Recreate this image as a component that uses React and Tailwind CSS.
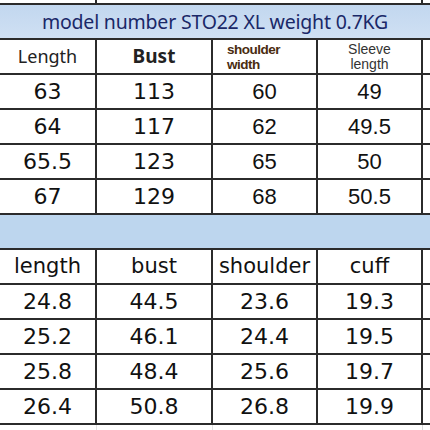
const comic = { fontFamily: '"DejaVu Sans", sans-serif' };

const cols = "grid grid-cols-[97px_116px_105px_105px_1fr]";
const cell = "flex items-center justify-center border-r-2 border-[#2b2b2b] leading-none text-[#111]";

const upper = [
  ["63", "113", "60", "49"],
  ["64", "117", "62", "49.5"],
  ["65.5", "123", "65", "50"],
  ["67", "129", "68", "50.5"],
];

const lower = [
  ["24.8", "44.5", "23.6", "19.3"],
  ["25.2", "46.1", "24.4", "19.5"],
  ["25.8", "48.4", "25.6", "19.7"],
  ["26.4", "50.8", "26.8", "19.9"],
];

function DataRow({ values, mixed, size = "text-[22px]" }) {
  return (
    <div className={`${cols} h-[35px] border-t-2 border-[#2b2b2b]`}>
      {values.map((v, i) => (
        <div
          key={i}
          className={`${cell} ${size}`}
          style={mixed && i > 1 ? { fontFamily: '"Liberation Sans", Arial, sans-serif' } : comic}
        >
          {v}
        </div>
      ))}
      <div />
    </div>
  );
}

export default function App() {
  return (
    <div className="w-[430px] h-[430px] bg-white overflow-hidden" style={{ fontFamily: '"Liberation Sans", Arial, sans-serif' }}>
      {/* cut-off row at the top */}
      <div className={`${cols} h-[3px]`}>
        <div className="border-r-2 border-[#2b2b2b]" />
        <div />
        <div className="border-r-2 border-[#2b2b2b] col-span-2" />
        <div className="border-l-2 border-[#2b2b2b] -ml-[2px]" />
      </div>

      <div className="h-[35px] border-t-2 border-[#2b2b2b] bg-gradient-to-b from-[#c2d7ef] to-[#cfe0f3] flex items-center justify-center text-[19.5px] text-[#1a2868] tracking-[-0.2px]" style={{ fontFamily: '"Noto Sans", sans-serif' }}>
        model number STO22 XL weight 0.7KG
      </div>

      <div className={`${cols} h-[35px] border-t-2 border-[#2b2b2b]`}>
        <div className="flex items-center justify-center border-r-2 border-[#2b2b2b] text-[18px] text-[#222]" style={{ fontFamily: '"Noto Sans", sans-serif' }}>
          Length
        </div>
        <div className="flex items-center justify-center border-r-2 border-[#2b2b2b] text-[19px] font-bold text-[#222]" style={{ fontFamily: '"Noto Sans", sans-serif' }}>
          Bust
        </div>
        <div className="flex flex-col justify-center border-r-2 border-[#2b2b2b] pl-[14px] text-[13.5px] font-bold leading-[15px] text-[#4a2c10] tracking-[-0.5px]">
          <div>shoulder</div>
          <div>width</div>
        </div>
        <div className="flex flex-col items-center justify-center border-r-2 border-[#2b2b2b] text-[14px] leading-[15px] text-[#333]">
          <div>Sleeve</div>
          <div>length</div>
        </div>
        <div />
      </div>

      {upper.map((r, i) => (
        <DataRow key={i} values={r} mixed />
      ))}

      <div className="h-[35px] border-t-2 border-[#2b2b2b] bg-[#bdd6ee]" />

      <DataRow values={["length", "bust", "shoulder", "cuff"]} size="text-[21px]" />
      {lower.map((r, i) => (
        <DataRow key={i} values={r} />
      ))}

      <div className={`${cols} h-[8px] border-t-2 border-[#2b2b2b]`}>
        <div className="border-r border-[#e2e2e2]" />
        <div className="border-r border-[#e2e2e2]" />
        <div />
        <div className="border-r border-[#d8d8d8]" />
        <div />
      </div>
    </div>
  );
}
